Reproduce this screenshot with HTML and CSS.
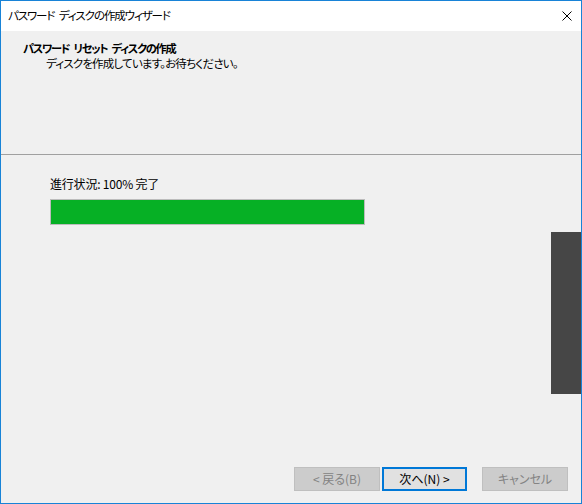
FILE: index.html
```html
<!DOCTYPE html>
<html lang="ja">
<head>
<meta charset="utf-8">
<title>パスワード ディスクの作成ウィザード</title>
<link rel="stylesheet" href="styles.css">
</head>
<body>
<div class="window">
  <div class="titlebar">
    <span class="title">パスワード ディスクの作成ウィザード</span>
    <span class="close">
      <svg width="10" height="10" viewBox="0 0 10 10"><path d="M0.5 0.5 L9.5 9.5 M9.5 0.5 L0.5 9.5" stroke="#000" stroke-width="1" fill="none"/></svg>
    </span>
  </div>
  <div class="header">
    <div class="h-title">パスワード リセット ディスクの作成</div>
    <div class="h-sub">ディスクを作成しています。お待ちください。</div>
  </div>
  <div class="content">
    <div class="label">進行状況: 100% 完了</div>
    <div class="progress"><div class="fill" style="width:100%"></div></div>
  </div>
  <div class="footer">
    <button class="btn disabled">&lt; 戻る(B)</button>
    <button class="btn default">次へ(N) &gt;</button>
    <button class="btn disabled cancel">キャンセル</button>
  </div>
  <div class="sidebox"></div>
</div>
</body>
</html>
```
FILE: styles.css
```css
html, body {
  margin: 0;
  padding: 0;
}
body {
  width: 582px;
  height: 504px;
  font-family: "Noto Sans CJK JP", "Noto Sans", sans-serif;
  font-size: 12px;
  font-feature-settings: "palt";
  color: #000;
}
.window {
  position: relative;
  box-sizing: border-box;
  width: 582px;
  height: 504px;
  border: 1px solid #1883d7;
  background: #f0f0f0;
  display: flex;
  flex-direction: column;
}
.titlebar {
  height: 30px;
  background: #fff;
  display: flex;
  align-items: center;
  justify-content: space-between;
  padding: 0 9px 0 7px;
  flex: none;
}
.title {
  font-size: 11.5px;
  letter-spacing: -1.1px;
  word-spacing: 3px;
  line-height: 15px;
  padding-bottom: 1px;
}
.close {
  display: flex;
  width: 10px;
  height: 10px;
  margin-top: -1px;
}
.header {
  flex: none;
  height: 124px;
  box-sizing: border-box;
  border-bottom: 1px solid #a0a0a0;
  padding: 10px 0 0 22px;
  background: #f0f0f0;
}
.h-title {
  font-size: 11.2px;
  font-weight: bold;
  letter-spacing: -1.3px;
  word-spacing: 3px;
  line-height: 15px;
}
.h-sub {
  font-size: 11.5px;
  letter-spacing: -0.8px;
  line-height: 15px;
  padding-left: 23px;
}
.content {
  flex: 1;
  padding: 21px 0 0 49px;
}
.label {
  line-height: 15px;
  letter-spacing: -0.2px;
}
.progress {
  margin-top: 8px;
  width: 315px;
  height: 26px;
  box-sizing: border-box;
  border: 1px solid #bcbcbc;
  background: #e6e6e6;
}
.fill {
  height: 100%;
  background: #06b025;
}
.footer {
  flex: none;
  display: flex;
  justify-content: flex-end;
  gap: 2px;
  padding: 0 13px 12px 0;
}
.btn {
  width: 86px;
  height: 24px;
  box-sizing: border-box;
  font-family: inherit;
  font-size: 12px;
  font-feature-settings: "palt";
  padding: 0;
  margin: 0;
  line-height: 16px;
  border-radius: 0;
}
.disabled {
  background: #cccccc;
  border: 1px solid #bfbfbf;
  color: #838383;
}
.default {
  width: 85px;
  background: #e1e1e1;
  border: 2px solid #0078d7;
  color: #000;
}
.cancel {
  margin-left: 13px;
}
.sidebox {
  position: absolute;
  left: 550px;
  top: 231px;
  width: 30px;
  height: 162px;
  background: #464646;
}
```
